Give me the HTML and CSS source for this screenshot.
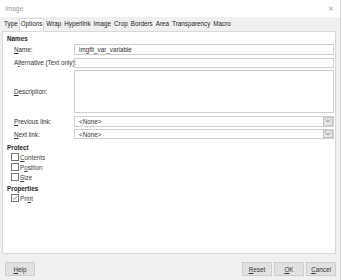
FILE: index.html
```html
<!DOCTYPE html>
<html lang="en">
<head>
    <meta charset="UTF-8">
    <title>Image</title>
    <link rel="stylesheet" href="styles.css">
</head>
<body>
    <div class="dialog">
        <div class="titlebar">
            <span class="title">Image</span>
            <span class="close">&#x2715;</span>
        </div>

        <div class="tabs">
            <span class="tab">Type</span>
            <span class="tab active">Options</span>
            <span class="tab">Wrap</span>
            <span class="tab">Hyperlink</span>
            <span class="tab">Image</span>
            <span class="tab">Crop</span>
            <span class="tab">Borders</span>
            <span class="tab">Area</span>
            <span class="tab">Transparency</span>
            <span class="tab">Macro</span>
        </div>

        <div class="panel">
            <div class="section-title">Names</div>
            <div class="form">
                <label><u>N</u>ame:</label>
                <div class="field">imgfit_var_variable</div>

                <label>A<u>l</u>ternative (Text only):</label>
                <div class="field"></div>

                <label><u>D</u>escription:</label>
                <div class="field area"></div>

                <label><u>P</u>revious link:</label>
                <div class="field select">&lt;None&gt;<span class="drop"><svg width="6" height="4" viewBox="0 0 6 4"><path d="M0.5 0.5 L3 3 L5.5 0.5" fill="none" stroke="#777" stroke-width="0.8"/></svg></span></div>

                <label><u>N</u>ext link:</label>
                <div class="field select">&lt;None&gt;<span class="drop"><svg width="6" height="4" viewBox="0 0 6 4"><path d="M0.5 0.5 L3 3 L5.5 0.5" fill="none" stroke="#777" stroke-width="0.8"/></svg></span></div>
            </div>

            <div class="section-title">Protect</div>
            <div class="checks">
                <div class="check"><span class="box"></span><u>C</u>ontents</div>
                <div class="check"><span class="box"></span>P<u>o</u>sition</div>
                <div class="check"><span class="box"></span><u>S</u>ize</div>
            </div>

            <div class="section-title">Properties</div>
            <div class="checks">
                <div class="check"><span class="box"><svg width="7" height="6" viewBox="0 0 7 6"><path d="M0.8 3 L2.6 4.8 L6.2 0.8" fill="none" stroke="#555" stroke-width="0.9"/></svg></span>Pri<u>n</u>t</div>
            </div>
        </div>

        <div class="buttons">
            <button><u>H</u>elp</button>
            <span class="spacer"></span>
            <button><u>R</u>eset</button>
            <button><u>O</u>K</button>
            <button><u>C</u>ancel</button>
        </div>
    </div>
</body>
</html>
```

FILE: styles.css
```css
* { box-sizing: border-box; }
body { margin: 0; background: #fff; font-family: "Liberation Sans", Arial, sans-serif; font-size: 6.3px; color: #222; }
u { text-decoration: underline; }
.dialog { width: 341px; height: 280px; background: #f0f0f0; border-right: 1px solid #d4d4d4; display: flex; flex-direction: column; }
.titlebar { height: 17px; flex: none; background: #fff; display: flex; align-items: center; justify-content: space-between; padding: 0 6px 0 5px; }
.title { color: #999; font-size: 6.5px; }
.close { color: #aaa; font-size: 7px; }
.tabs { display: flex; align-items: flex-end; padding: 2px 0 0 2px; height: 14px; flex: none; }
.tab { padding: 1px 1px 3px 2px; line-height: 8px; }
.tab.active { background: #fff; border: 1px solid #d9d9d9; border-bottom: none; padding: 1px 1px 4px 1px; margin-bottom: -1px; }
.panel { margin: 0 4px 0 2px; height: 223px; flex: none; background: #fff; border: 1px solid #d9d9d9; padding: 2px 1px 0 4px; }
.section-title { font-weight: bold; line-height: 9px; }
.form { display: grid; grid-template-columns: 60px 1fr; grid-template-rows: 11px 10px 43px 11px 10px; row-gap: 2.5px; padding-left: 7px; margin: 1px 0 4px; }
.form label { display: flex; align-items: center; color: #333; white-space: nowrap; }
.field { border: 1px solid #cfcfcf; padding-left: 4px; display: flex; align-items: center; color: #333; position: relative; }
.select { padding-right: 10px; }
.drop { position: absolute; right: 0; top: 0; bottom: 0; width: 10px; background: #e5e5e5; border: 1px solid #c4c4c4; display: flex; align-items: center; justify-content: center; }
.checks { padding-left: 4px; margin-bottom: 2px; }
.check { display: flex; align-items: center; height: 10px; color: #444; }
.box { width: 8px; height: 8px; border: 1px solid #777; margin-right: 1px; display: flex; align-items: center; justify-content: center; background: #fff; }
.buttons { display: flex; gap: 2px; padding: 8px 4px 0 5px; }
.spacer { flex: 1; }
button { width: 30px; height: 14px; background: #e1e1e1; border: 1px solid #cdcdcd; font-family: inherit; font-size: 6.3px; color: #333; padding: 0; }
```
